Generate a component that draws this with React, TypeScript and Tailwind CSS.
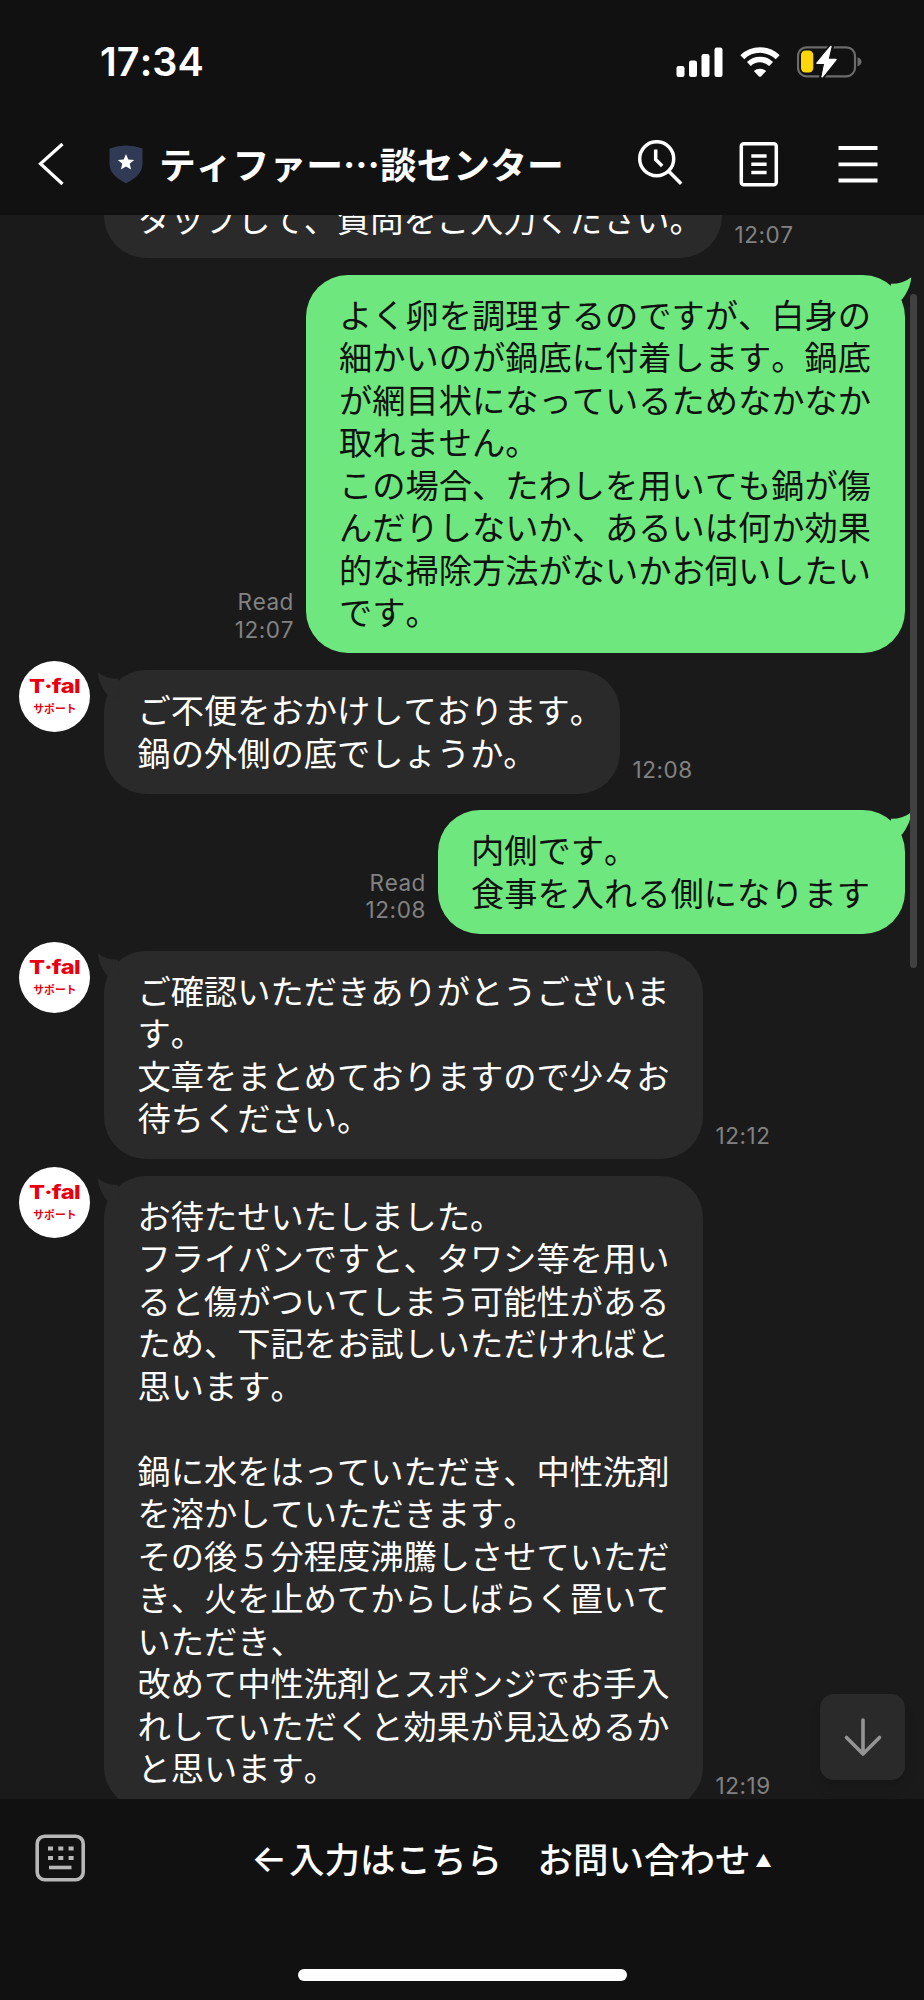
import React from 'react';

interface Message {
  from: 'me' | 'support';
  text: string;
  time: string;
  width: string;
}

const messages: Message[] = [
  {
    from: 'me',
    time: '12:07',
    width: 'w-[599px]',
    text: 'よく卵を調理するのですが、白身の\n細かいのが鍋底に付着します。鍋底\nが網目状になっているためなかなか\n取れません。\nこの場合、たわしを用いても鍋が傷\nんだりしないか、あるいは何か効果\n的な掃除方法がないかお伺いしたい\nです。',
  },
  {
    from: 'support',
    time: '12:08',
    width: 'w-[516px]',
    text: 'ご不便をおかけしております。\n鍋の外側の底でしょうか。',
  },
  {
    from: 'me',
    time: '12:08',
    width: 'w-[467px]',
    text: '内側です。\n食事を入れる側になります',
  },
  {
    from: 'support',
    time: '12:12',
    width: 'w-[599px]',
    text: 'ご確認いただきありがとうございま\nす。\n文章をまとめておりますので少々お\n待ちください。',
  },
  {
    from: 'support',
    time: '12:19',
    width: 'w-[599px]',
    text: 'お待たせいたしました。\nフライパンですと、タワシ等を用い\nると傷がついてしまう可能性がある\nため、下記をお試しいただければと\n思います。\n\n鍋に水をはっていただき、中性洗剤\nを溶かしていただきます。\nその後５分程度沸騰しさせていただ\nき、火を止めてからしばらく置いて\nいただき、\n改めて中性洗剤とスポンジでお手入\nれしていただくと効果が見込めるか\nと思います。',
  },
];

function StatusBar() {
  return (
    <div className="flex items-start justify-between pl-[100px] pr-[61px] pt-[38px] h-[113px] text-white">
      <span className="font-['Inter'] font-semibold text-[39.500px] leading-[48px] tracking-[0.1px]">17:34</span>
      <div className="flex items-center gap-[17px] pt-[7px]">
        <svg width="47" height="32" viewBox="0 0 47 32" fill="#fff">
          <rect x="0.5" y="20" width="8" height="11" rx="2.2" />
          <rect x="13" y="14.5" width="8" height="16.5" rx="2.2" />
          <rect x="25.5" y="8" width="8" height="23" rx="2.2" />
          <rect x="38.5" y="1.5" width="8" height="29.5" rx="2.2" />
        </svg>
        <svg width="40" height="32" viewBox="0 0 40 32" fill="none" stroke="#fff" strokeWidth="5.6">
          <path d="M2.3 11.2 A25.5 25.5 0 0 1 37.7 11.2" />
          <path d="M8.9 18 A16 16 0 0 1 31.1 18" />
          <path d="M13.8 25 A9.5 9.5 0 0 1 26.2 25 L21 30.4 Q20 31.2 19 30.4 Z" fill="#fff" stroke="none" />
        </svg>
        <svg width="66" height="34" viewBox="0 0 66 34">
          <rect x="1" y="2.3" width="57" height="29" rx="8.5" fill="none" stroke="#6b6b6b" strokeWidth="2.2" />
          <path d="M60.5 12.2 Q64.5 13.5 64.5 16.8 Q64.5 20 60.5 21.4 Z" fill="#6b6b6b" />
          <rect x="4" y="5.5" width="12.3" height="22" rx="4.5" fill="#ffd60a" />
          <path d="M34.5 1 L19.5 18.8 H27.5 L24.5 32.6 L39.5 14.2 H31 Z" fill="#fff" stroke="#111" strokeWidth="5" strokeLinejoin="round" paintOrder="stroke" />
          <path d="M33.8 1.5 L20 18.2 H28 L25.2 31.8 L39 14.5 H30.8 Z" fill="#fff" stroke="#fff" strokeWidth="1.5" strokeLinejoin="round" />
        </svg>
      </div>
    </div>
  );
}

function TitleBar() {
  return (
    <div className="flex items-center h-[102px] pl-[38px] text-white">
      <svg width="28" height="44" viewBox="0 0 28 44" fill="none" stroke="#fff" strokeWidth="3.2">
        <path d="M24.5 2 L2.5 21.8 L24.5 42" />
      </svg>
      <svg className="ml-[42px]" width="36" height="40" viewBox="0 0 36 40">
        <path d="M1.5 4.5 Q18 -1.5 34.5 4.5 V20 C34.5 29 27 34.5 18 39.2 C9 34.5 1.5 29 1.5 20 Z" fill="#303a54" />
        <path d="M18 10 L20.3 15.5 L26.2 15.9 L21.7 19.7 L23.1 25.5 L18 22.4 L12.9 25.5 L14.3 19.7 L9.8 15.9 L15.7 15.5 Z" fill="#fff" />
      </svg>
      <h1 className="ml-[15px] -mt-[3px] w-[403px] whitespace-nowrap text-[36.8px] leading-[48px] font-bold">ティファー…談センター</h1>
      <div className="flex items-center ml-[73px] gap-[55px]">
        <svg width="48" height="48" viewBox="0 0 48 48" fill="none" stroke="#fff" strokeWidth="3.5">
          <circle cx="21.7" cy="18.7" r="17" />
          <path d="M33.5 31 L46.2 43.7" />
          <path d="M20.7 9.5 V19.5 L27.2 26" />
        </svg>
        <svg width="42" height="48" viewBox="0 0 42 48" fill="none" stroke="#fff" strokeWidth="3.5">
          <rect x="3.3" y="3.8" width="35" height="41" rx="2.5" />
          <path d="M13.3 16 H28.6 M13.3 24.2 H28.6 M13.3 32.5 H28.6" />
        </svg>
        <svg width="44" height="48" viewBox="0 0 44 48" fill="none" stroke="#fff" strokeWidth="3.8">
          <path d="M3.5 8 H42.5 M3.5 24.3 H42.5 M3.5 40.5 H42.5" />
        </svg>
      </div>
    </div>
  );
}

function Avatar() {
  return (
    <div className="w-[71px] h-[71px] -mt-[9px] mr-[14px] shrink-0 rounded-full bg-white text-[#e60012] flex flex-col items-center">
      <span className="mt-[16px] font-['Inter'] font-extrabold text-[19px] leading-[20px] scale-x-[1.25] tracking-[-0.6px]">T·fal</span>
      <span className="mt-[4px] text-[10.8px] leading-[14px] font-bold whitespace-nowrap">サポート</span>
    </div>
  );
}

function Tail({ mine }: { mine: boolean }) {
  return (
    <svg
      className={`absolute top-0 ${mine ? '-right-[7px]' : '-left-[7px] -scale-x-100'}`}
      width="30" height="30" viewBox="0 0 30 30"
      fill={mine ? '#6ee87e' : '#2a2a2a'}
    >
      <path d="M9 8.8 C16 9 23 7 29.3 2.3 C28.5 11 25 18 20 24.5 L8 28 Z" />
    </svg>
  );
}

function Time({ children }: { children: React.ReactNode }) {
  return (
    <div className="self-end mx-[12px] mb-[10px] text-right text-[#828282] font-['Inter'] text-[22.5px] leading-[27.5px] tracking-[0.6px]">
      {children}
    </div>
  );
}

function Row({ message }: { message: Message }) {
  const mine = message.from === 'me';
  return (
    <div className={`flex shrink-0 ${mine ? 'justify-end pr-[19px]' : 'pl-[19.4px]'}`}>
      {!mine && <Avatar />}
      {mine && (
        <Time>
          <div>Read</div>
          <div>{message.time}</div>
        </Time>
      )}
      <div className={`relative shrink-0 rounded-[42px] px-[33px] pt-[18px] pb-[20.5px] ${message.width} ${mine ? 'bg-[#6ee87e] text-[#111]' : 'bg-[#2a2a2a] text-white'}`}>
        <Tail mine={mine} />
        <p className="relative whitespace-pre text-[33.25px] leading-[42.5px]">{message.text}</p>
      </div>
      {!mine && <Time>{message.time}</Time>}
    </div>
  );
}

export default function App() {
  return (
    <div lang="ja" className="w-[924px] h-[2000px] overflow-hidden flex flex-col bg-[#111] font-['Noto_Sans_CJK_JP',sans-serif] [font-kerning:none] [text-spacing-trim:space-all]">
      <header className="h-[215px] shrink-0 bg-[#111]">
        <StatusBar />
        <TitleBar />
      </header>

      <main className="relative h-[1584px] shrink-0 overflow-hidden bg-[#1a1a1a] flex flex-col gap-[16.8px]">
        {/* tail end of the previous message, scrolled under the header */}
        <div className="flex shrink-0 -mt-[80px] pl-[104.4px]">
          <div className="w-[618px] h-[123px] rounded-[42px] bg-[#2a2a2a] px-[33px] flex items-end pb-[18.5px]">
            <p className="whitespace-pre text-white text-[33.25px] leading-[42.5px]">タップして、質問をご入力ください。</p>
          </div>
          <Time>12:07</Time>
        </div>

        {messages.map((message, i) => (
          <Row key={i} message={message} />
        ))}

        <div className="absolute top-[79px] right-[7px] w-[7px] h-[674px] rounded-full bg-[#414141]" />

        <button className="absolute right-[19px] bottom-[19px] w-[85px] h-[86px] rounded-[14px] bg-[#2a2a2a] shadow-lg flex items-center justify-center">
          <svg width="42" height="42" viewBox="0 0 42 42" fill="none" stroke="#949494" strokeWidth="3.6" strokeLinecap="round" strokeLinejoin="round">
            <path d="M21 4 V38 M4.5 21.5 L21 38 L37.5 21.5" />
          </svg>
        </button>
      </main>

      <footer className="flex-1 bg-[#111] flex flex-col items-center">
        <div className="w-full h-[117px] flex items-center pl-[34px] text-white">
          <svg width="52" height="50" viewBox="0 0 52 50" fill="none" stroke="#b7b7b7" strokeWidth="3.6">
            <rect x="3.2" y="3.2" width="46" height="43.5" rx="7.5" />
            <path d="M14 15.5 H40" strokeWidth="4" strokeDasharray="5 5.3" />
            <path d="M14 25 H40" strokeWidth="4" strokeDasharray="5 5.3" />
            <path d="M15 34.5 H37.5" />
          </svg>
          <div className="ml-[165px] flex items-center whitespace-nowrap text-[35.5px] leading-[48px] font-medium">
            <span className="w-[38px] font-['Inter'] text-[38px]">←</span>
            <span>入力はこちら　お問い合わせ</span>
            <span className="ml-[5px] mt-[4px] text-[16px]">▲</span>
          </div>
        </div>
        <div className="mt-[53px] w-[329px] h-[12px] rounded-full bg-white" />
      </footer>
    </div>
  );
}
